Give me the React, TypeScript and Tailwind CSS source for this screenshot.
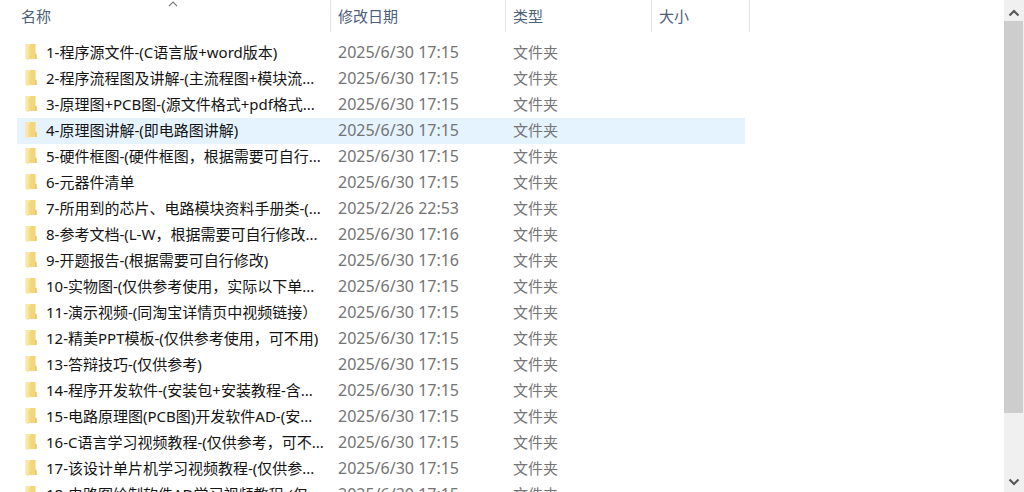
interface Entry {
  name: string;
  modified: string;
}

const entries: Entry[] = [
  { name: "1-程序源文件-(C语言版+word版本)", modified: "2025/6/30 17:15" },
  { name: "2-程序流程图及讲解-(主流程图+模块流...", modified: "2025/6/30 17:15" },
  { name: "3-原理图+PCB图-(源文件格式+pdf格式...", modified: "2025/6/30 17:15" },
  { name: "4-原理图讲解-(即电路图讲解)", modified: "2025/6/30 17:15" },
  { name: "5-硬件框图-(硬件框图，根据需要可自行...", modified: "2025/6/30 17:15" },
  { name: "6-元器件清单", modified: "2025/6/30 17:15" },
  { name: "7-所用到的芯片、电路模块资料手册类-(...", modified: "2025/2/26 22:53" },
  { name: "8-参考文档-(L-W，根据需要可自行修改...", modified: "2025/6/30 17:16" },
  { name: "9-开题报告-(根据需要可自行修改)", modified: "2025/6/30 17:16" },
  { name: "10-实物图-(仅供参考使用，实际以下单...", modified: "2025/6/30 17:15" },
  { name: "11-演示视频-(同淘宝详情页中视频链接）", modified: "2025/6/30 17:15" },
  { name: "12-精美PPT模板-(仅供参考使用，可不用)", modified: "2025/6/30 17:15" },
  { name: "13-答辩技巧-(仅供参考)", modified: "2025/6/30 17:15" },
  { name: "14-程序开发软件-(安装包+安装教程-含...", modified: "2025/6/30 17:15" },
  { name: "15-电路原理图(PCB图)开发软件AD-(安...", modified: "2025/6/30 17:15" },
  { name: "16-C语言学习视频教程-(仅供参考，可不...", modified: "2025/6/30 17:15" },
  { name: "17-该设计单片机学习视频教程-(仅供参...", modified: "2025/6/30 17:15" },
  { name: "18-电路图绘制软件AD学习视频教程-(仅...", modified: "2025/6/30 17:15" },
];

const SELECTED = 3;

function FolderIcon() {
  return (
    <svg className="h-5 w-3 shrink-0" viewBox="0 0 12 20" aria-hidden="true">
      <path d="M3.5 2H10.6V11.5L11.6 12.4V17H3.5Z" fill="#f3d57c" />
      <path d="M10.2 12.2H11.6V17H10.2Z" fill="#e9c566" />
      <path d="M0.4 2H5.2V4L4.6 4.8V16.6L2.8 18.6L0.4 16.8Z" fill="#fbe7a6" />
      <path d="M3.2 4.6L5.2 3V17H3.2Z" fill="#f8dc8c" />
    </svg>
  );
}

function Chevron({ down = false }: { down?: boolean }) {
  return (
    <svg className="h-2 w-3" viewBox="0 0 12 8" fill="none" aria-hidden="true">
      <path d={down ? "M1.5 1.5L6 6L10.5 1.5" : "M1.5 6.5L6 2L10.5 6.5"} stroke="#585858" strokeWidth="2.2" />
    </svg>
  );
}

function HeaderCell({ label, span = 1, sorted = false }: { label: string; span?: number; sorted?: boolean }) {
  return (
    <th
      scope="col"
      colSpan={span}
      aria-sort={sorted ? "ascending" : undefined}
      className="relative h-8 border-r border-[#e5e5e5] p-0 text-left font-normal"
    >
      {sorted && (
        <svg className="absolute top-0 left-1/2 h-2 w-3 -translate-x-1/2" viewBox="0 0 12 8" fill="none" aria-hidden="true">
          <path d="M1 6L5 2L9 6" stroke="#7b7b7b" strokeWidth="1.1" />
        </svg>
      )}
      <button type="button" className={`block h-8 w-full text-left text-[#4c607a] ${sorted ? "pl-1" : "pl-[7px]"}`}>
        {label}
      </button>
    </th>
  );
}

export default function App() {
  return (
    <div className="flex h-screen overflow-hidden bg-white font-['Noto_Sans','Noto_Sans_CJK_SC',sans-serif] text-[15px] leading-6 whitespace-nowrap">
      <main className="min-w-0 flex-1 overflow-hidden pl-[17px]">
        <table className="w-[733px] table-fixed border-separate border-spacing-0">
          <colgroup>
            <col className="w-[314px]" />
            <col className="w-[175px]" />
            <col className="w-[146px]" />
            <col className="w-[93px]" />
            <col className="w-[5px]" />
          </colgroup>
          <thead>
            <tr>
              <HeaderCell label="名称" sorted />
              <HeaderCell label="修改日期" />
              <HeaderCell label="类型" />
              <HeaderCell label="大小" span={2} />
            </tr>
          </thead>
          <tbody className="text-[#747474] before:block before:h-2">
            {entries.map((entry, index) => {
              const fill = index === SELECTED ? "bg-[#e5f3ff]" : "";
              return (
                <tr key={entry.name} className="h-[26px] align-top" aria-selected={index === SELECTED}>
                  <td className={`p-0 pl-2 text-[#141414] ${fill}`}>
                    <div className="flex items-center gap-[9px]">
                      <FolderIcon />
                      <span>{entry.name}</span>
                    </div>
                  </td>
                  <td className={`p-0 pl-[7px] text-base leading-6 ${fill}`}>{entry.modified}</td>
                  <td className={`p-0 pl-[7px] ${fill}`}>文件夹</td>
                  <td className={`p-0 ${fill}`} />
                  <td className="p-0" />
                </tr>
              );
            })}
          </tbody>
        </table>
      </main>
      <aside className="flex w-5 shrink-0 flex-col bg-[#f0f0f0] pr-px" aria-label="滚动条">
        <button type="button" aria-label="向上滚动" className="flex h-[21px] items-center justify-center pt-1">
          <Chevron />
        </button>
        <div className="min-h-0 flex-1">
          <div className="h-[87%] bg-[#cdcdcd]" />
        </div>
        <button type="button" aria-label="向下滚动" className="flex h-[21px] items-center justify-center">
          <Chevron down />
        </button>
      </aside>
    </div>
  );
}
